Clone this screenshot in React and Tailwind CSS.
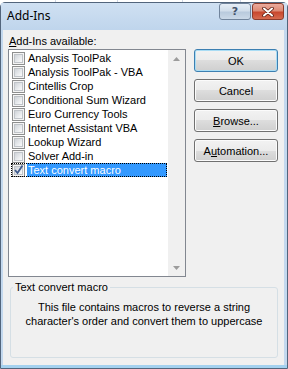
import React from "react";

const items = [
  "Analysis ToolPak",
  "Analysis ToolPak - VBA",
  "Cintellis Crop",
  "Conditional Sum Wizard",
  "Euro Currency Tools",
  "Internet Assistant VBA",
  "Lookup Wizard",
  "Solver Add-in",
  "Text convert macro",
];

const CheckBox = ({ checked }) => (
  <div className="mt-[1px] flex h-[13px] w-[13px] shrink-0 items-center justify-center border border-[#8e8f8f] bg-[#f4f4f4]">
    <div className="relative h-[9px] w-[9px] border border-[#c0c4c9] bg-[linear-gradient(135deg,#cfd3d8_0%,#eef0f2_70%,#fbfbfb_100%)]">
      {checked && (
        <svg
          width="11"
          height="11"
          viewBox="0 0 11 11"
          className="absolute left-[-2px] top-[-3px]"
        >
          <path
            d="M2 6 L4.5 9 L9.5 1.5"
            fill="none"
            stroke="#3f5a8c"
            strokeWidth="1.8"
          />
        </svg>
      )}
    </div>
  </div>
);

const Button = ({ children, primary }) => (
  <div
    className={
      "flex h-[23px] w-[84px] items-center justify-center rounded-[3px] border bg-[linear-gradient(to_bottom,#f2f2f2_0%,#ebebeb_50%,#dddddd_50%,#cfcfcf_100%)] " +
      (primary
        ? "border-[#3c7fb1] shadow-[inset_0_0_0_1px_#a9dcf4]"
        : "border-[#707070] shadow-[inset_0_0_0_1px_#fbfbfb]")
    }
  >
    {children}
  </div>
);

const Arrow = ({ up }) => (
  <div className="flex h-[17px] items-center justify-center">
    <svg width="7" height="4" viewBox="0 0 7 4">
      <polygon
        points={up ? "3.5,0 7,4 0,4" : "0,0 7,0 3.5,4"}
        fill="#9c9c9c"
      />
    </svg>
  </div>
);

export default function App() {
  return (
    <div className="flex h-[369px] w-[288px] flex-col bg-white font-['Liberation_Sans',Arial,sans-serif] text-[11px] leading-[14px] text-black">
      {/* sheet grid peeking above the window */}
      <div className="flex h-[2px] shrink-0">
        <div className="w-[56px] border-r border-[#d0d7e5]" />
        <div className="w-[62px] border-r border-[#d0d7e5]" />
        <div className="w-[65px] border-r border-[#d0d7e5]" />
        <div className="w-[58px] border-r border-[#d0d7e5]" />
      </div>

      <div className="flex flex-1 flex-col rounded-t-[5px] border border-[#52657c] bg-[#c3d8ee]">
        {/* title bar */}
        <div className="flex h-[27px] shrink-0 items-start bg-[linear-gradient(to_bottom,#cfe0f2,#bfd5ec)] pl-[6px] pr-[3px]">
          <div className="self-center pb-[2px] font-['Noto_Sans',sans-serif] text-[12px] leading-[16px] text-black">
            Add-Ins
          </div>
          <div className="ml-auto flex gap-[1px]">
            <div className="flex h-[17px] w-[32px] items-center justify-center rounded-[3px] border border-[#71849c] bg-[linear-gradient(to_bottom,#e6eef6_0%,#d2deeb_45%,#b9cadd_55%,#cbd9e8_100%)] font-['DejaVu_Sans',sans-serif] text-[11px] font-bold leading-none text-[#44526a]">
              ?
            </div>
            <div className="flex h-[17px] w-[32px] items-center justify-center rounded-[3px] border border-[#8c3b2c] bg-[linear-gradient(to_bottom,#ebab9d_0%,#dd8a75_45%,#c8472e_55%,#d66b50_100%)]">
              <svg width="12" height="10" viewBox="0 0 12 10">
                <path
                  d="M2 1.5 L10 8.5 M10 1.5 L2 8.5"
                  stroke="#5b1d12"
                  strokeWidth="3.6"
                  strokeLinecap="round"
                />
                <path
                  d="M2 1.5 L10 8.5 M10 1.5 L2 8.5"
                  stroke="#ffffff"
                  strokeWidth="2"
                  strokeLinecap="round"
                />
              </svg>
            </div>
          </div>
        </div>

        {/* client area */}
        <div className="ml-[2px] mr-[3px] flex flex-1 flex-col bg-[#f0f0f0] pl-[5px] pr-[6px] pt-[4px]">
          <div className="flex justify-between">
            <div className="flex flex-col">
              <div className="ml-[1px]">
                <u>A</u>dd-Ins available:
              </div>
              <div className="mt-[1px] flex h-[228px] w-[178px] border border-[#828790] bg-white">
                <div className="flex flex-1 flex-col pt-[1px]">
                  {items.map((name, i) => {
                    const sel = i === items.length - 1;
                    return (
                      <div
                        key={name}
                        className={
                          "ml-[2px] mr-[1px] flex h-[14px] items-start " +
                          (sel ? "outline outline-1 -outline-offset-1 outline-dotted outline-black" : "")
                        }
                      >
                        <div className="ml-[1px]">
                          <CheckBox checked={sel} />
                        </div>
                        <div
                          className={
                            "ml-[2px] h-[14px] flex-1 whitespace-nowrap pl-[1px] " +
                            (sel ? "bg-[#3399ff] text-white" : "")
                          }
                        >
                          {name}
                        </div>
                      </div>
                    );
                  })}
                </div>
                <div className="flex w-[17px] flex-col justify-between bg-[#f0f0f0]">
                  <Arrow up />
                  <Arrow />
                </div>
              </div>
            </div>

            <div className="flex flex-col gap-[7px] pt-[15px]">
              <Button primary>OK</Button>
              <Button>Cancel</Button>
              <Button>
                <span>
                  <u>B</u>rowse...
                </span>
              </Button>
              <Button>
                <span>
                  A<u>u</u>tomation...
                </span>
              </Button>
            </div>
          </div>

          <fieldset className="ml-[2px] mt-[3px] h-[78px] rounded-[3px] border border-[#d5dfe5] pt-[6px]">
            <legend className="ml-[2px] px-[2px]">Text convert macro</legend>
            <div className="text-center">
              This file contains macros to reverse a string
              <br />
              character's order and convert them to uppercase
            </div>
          </fieldset>
        </div>

        <div className="h-[3px] shrink-0 bg-[#a3d1ef]" />
      </div>
    </div>
  );
}
